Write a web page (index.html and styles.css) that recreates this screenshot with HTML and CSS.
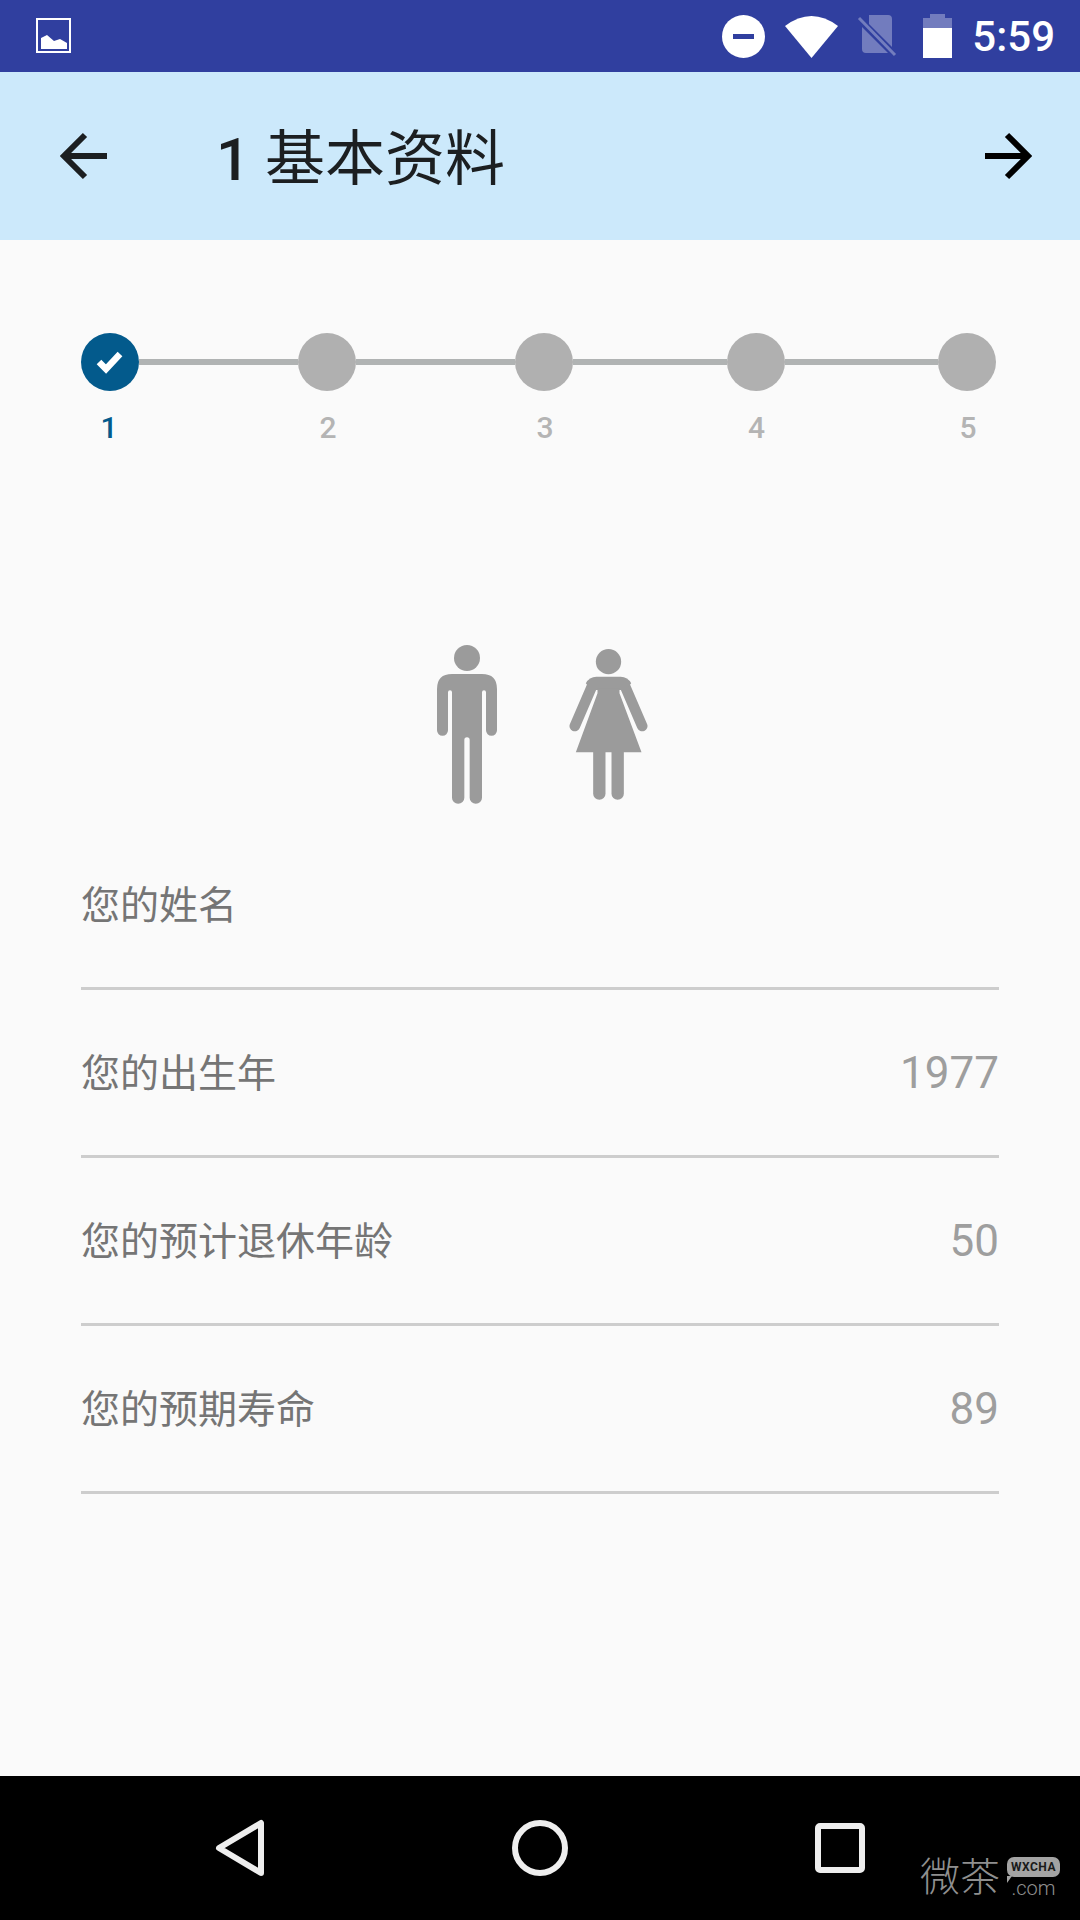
FILE: index.html
```html
<!DOCTYPE html>
<html lang="zh-CN">
<head>
  <meta charset="UTF-8" />
  <title>基本资料</title>
  <link rel="stylesheet" href="styles.css">
</head>
<body>
  <div class="page">
    <header class="status-bar">
      <svg class="status-gallery" width="35" height="35" viewBox="0 0 35 35">
        <rect x="1" y="1" width="33" height="33" fill="none" stroke="#fff" stroke-width="2" />
        <path d="M5 31V20L11 17L18 23L24 21L31 25V31Z" fill="#fff" />
      </svg>
      <div class="status-right">
        <svg width="43" height="43" viewBox="0 0 43 43">
          <circle cx="21.5" cy="21.5" r="21.5" fill="#fff" />
          <rect x="11" y="19" width="21" height="5" fill="#303f9f" />
        </svg>
        <svg width="53" height="43" viewBox="0 0 53 43">
          <path d="M0 11Q26.500 -9 53 11L26.500 43Z" fill="#fff" />
        </svg>
        <svg class="status-sim" width="40" height="42" viewBox="0 0 40 42">
          <path d="M12 0H31Q35 0 35 4V32L12 9L12 0ZM5 12L31 38H9Q5 38 5 34Z" fill="#fff" opacity="0.32" />
          <path d="M2 3L38 40" stroke="#fff" stroke-width="3" opacity="0.32" />
        </svg>
        <svg class="status-battery" width="29" height="44" viewBox="0 0 29 44">
          <path d="M7 0H22V4H29V14H0V4H7Z" fill="#fff" opacity="0.32" />
          <rect y="14" width="29" height="30" fill="#fff" />
        </svg>
        <span class="status-time">5:59</span>
      </div>
    </header>

    <div class="app-bar">
      <svg class="arrow-back" width="48" height="48" viewBox="0 0 48 48">
        <path d="M47 24H4M25 3L4 24L25 45" fill="none" stroke="#1c1f21" stroke-width="6" />
      </svg>
      <h1 class="app-title"><span class="app-title-num">1</span> 基本资料</h1>
      <svg class="arrow-next" width="48" height="48" viewBox="0 0 48 48">
        <path d="M1 24H44M23 3L44 24L23 45" fill="none" stroke="#000" stroke-width="6" />
      </svg>
    </div>

    <main class="content">
      <div class="stepper">
        <div class="step step-active">
          <div class="step-dot">
            <svg width="30" height="24" viewBox="0 0 30 24">
              <path d="M4 12L11 19L25 4" fill="none" stroke="#fff" stroke-width="6.500" />
            </svg>
          </div>
          <span class="step-num">1</span>
        </div>
        <div class="step-line"></div>
        <div class="step">
          <div class="step-dot"></div>
          <span class="step-num">2</span>
        </div>
        <div class="step-line"></div>
        <div class="step">
          <div class="step-dot"></div>
          <span class="step-num">3</span>
        </div>
        <div class="step-line step-line-short"></div>
        <div class="step">
          <div class="step-dot"></div>
          <span class="step-num">4</span>
        </div>
        <div class="step-line step-line-short"></div>
        <div class="step">
          <div class="step-dot"></div>
          <span class="step-num">5</span>
        </div>
      </div>

      <div class="gender">
        <svg width="60" height="159" viewBox="50 45 180 477">
          <circle cx="140" cy="84" r="39" fill="#9b9b9b" />
          <path d="M95 132H185Q230 132 230 177V301A16.500 16.500 0 0 1 197 301V187A6 6 0 0 0 185 187V503A18.500 18.500 0 0 1 148 503V330A8 8 0 0 0 132 330V503A18.500 18.500 0 0 1 95 503V187A6 6 0 0 0 83 187V301A16.500 16.500 0 0 1 50 301V177Q50 132 95 132Z" fill="#9b9b9b" />
        </svg>
        <svg width="79" height="151" viewBox="448 57 236 453">
          <circle cx="566" cy="95" r="38" fill="#9b9b9b" />
          <path d="M518 165L465 288M614 165L667 288" fill="none" stroke="#9b9b9b" stroke-width="32" stroke-linecap="round" />
          <path d="M530 140H602Q624 140 634 160L618 180H514L498 160Q508 140 530 140Z" fill="#9b9b9b" />
          <path d="M533 175H599V190L665 367H612V491A18.500 18.500 0 0 1 575 491V367H557V491A18.500 18.500 0 0 1 520 491V367H468L533 190Z" fill="#9b9b9b" />
        </svg>
      </div>

      <div class="field"><span class="field-label">您的姓名</span></div>
      <div class="field"><span class="field-label">您的出生年</span><span class="field-value">1977</span></div>
      <div class="field"><span class="field-label">您的预计退休年龄</span><span class="field-value">50</span></div>
      <div class="field"><span class="field-label">您的预期寿命</span><span class="field-value">89</span></div>
    </main>

    <footer class="nav-bar">
      <svg width="50" height="58" viewBox="0 0 50 58">
        <path d="M46 4V54L4 29Z" fill="none" stroke="#eee" stroke-width="6" stroke-linejoin="round" />
      </svg>
      <svg width="56" height="56" viewBox="0 0 56 56">
        <circle cx="28" cy="28" r="25" fill="none" stroke="#eee" stroke-width="6" />
      </svg>
      <svg width="50" height="50" viewBox="0 0 50 50">
        <rect x="3" y="3" width="44" height="44" rx="2" fill="none" stroke="#eee" stroke-width="6" />
      </svg>
      <div class="watermark">
        <span class="watermark-name">微茶</span>
        <div class="watermark-side">
          <span class="watermark-bubble">WXCHA</span>
          <span class="watermark-com">.com</span>
        </div>
      </div>
    </footer>
  </div>
</body>
</html>
```

FILE: styles.css
```css
body, h1 {
  margin: 0;
  padding: 0;
}

body {
  font-family: Roboto, 'Noto Sans CJK SC', sans-serif;
  background-color: #fafafa;
}

.page {
  width: 1080px;
  height: 1920px;
  display: flex;
  flex-direction: column;
  overflow: hidden;
}

.status-bar {
  height: 72px;
  background-color: #303f9f;
  display: flex;
  align-items: center;
  justify-content: space-between;
  padding: 0 25px 0 36px;
}

.status-gallery {
  margin-top: -1px;
}

.status-right {
  display: flex;
  align-items: center;
  gap: 20px;
}

.status-sim {
  margin-left: -1px;
  margin-right: 6px;
}

.status-time {
  color: #fff;
  font-size: 42px;
  font-weight: 500;
}

.app-bar {
  height: 168px;
  background-color: #cce9fb;
  display: flex;
  align-items: center;
  padding: 0 48px 0 60px;
}

.app-title {
  font-size: 60px;
  font-weight: 400;
  color: #1c1f21;
  margin-left: 108px;
  padding-bottom: 6px;
}

.app-title-num {
  font-weight: 500;
}

.arrow-next {
  margin-left: auto;
}

.content {
  flex: 1;
  padding: 93px 81px 0;
}

.stepper {
  display: flex;
  height: 114px;
}

.step {
  width: 58px;
  display: flex;
  flex-direction: column;
  align-items: center;
}

.step-dot {
  flex-shrink: 0;
  width: 58px;
  height: 58px;
  border-radius: 50%;
  background-color: #b0b0b0;
  display: flex;
  align-items: center;
  justify-content: center;
}

.step-num {
  margin-top: 17px;
  padding-left: 2px;
  font-size: 30px;
  line-height: 40px;
  font-weight: 500;
  color: #b4b4b4;
}

.step-active .step-num {
  padding: 0 2px 0 0;
  color: #035a8c;
}

.step-active .step-dot {
  background-color: #035a8c;
}

.step-line {
  width: 159px;
  height: 6px;
  margin-top: 26px;
  background-color: #b0b3b3;
}

.step-line-short {
  width: 153.5px;
}

.gender {
  display: flex;
  justify-content: center;
  align-items: center;
  gap: 72px;
  padding-left: 5px;
  margin-top: 198px;
  margin-bottom: 18px;
}

.field {
  height: 165px;
  border-bottom: 3px solid #cdcdcd;
  display: flex;
  align-items: center;
  justify-content: space-between;
}

.field-label {
  font-size: 39px;
  padding-bottom: 5px;
  color: #757575;
}

.field-value {
  font-size: 44px;
  color: #9e9e9e;
}

.nav-bar {
  position: relative;
  height: 144px;
  background-color: #000;
  display: grid;
  grid-template-columns: repeat(3, 300px);
  justify-items: center;
  align-items: center;
  padding: 0 90px;
}

.watermark {
  position: absolute;
  left: 920px;
  top: 81px;
  display: flex;
  gap: 7px;
  color: #8f8f8f;
}

.watermark-name {
  font-size: 40px;
  line-height: 42px;
  font-weight: 300;
}

.watermark-side {
  display: flex;
  flex-direction: column;
  align-items: center;
}

.watermark-bubble {
  position: relative;
  width: 53px;
  height: 20px;
  border-radius: 7px;
  background-color: #a3a3a3;
  color: #1a1a1a;
  font-size: 12px;
  line-height: 20px;
  font-weight: 700;
  letter-spacing: 0.5px;
  text-align: center;
}

.watermark-bubble::after {
  content: "";
  position: absolute;
  left: 0;
  bottom: -6px;
  border-top: 7px solid #a3a3a3;
  border-right: 5px solid transparent;
}

.watermark-com {
  font-size: 20px;
  line-height: 22px;
  font-weight: 300;
}
```
